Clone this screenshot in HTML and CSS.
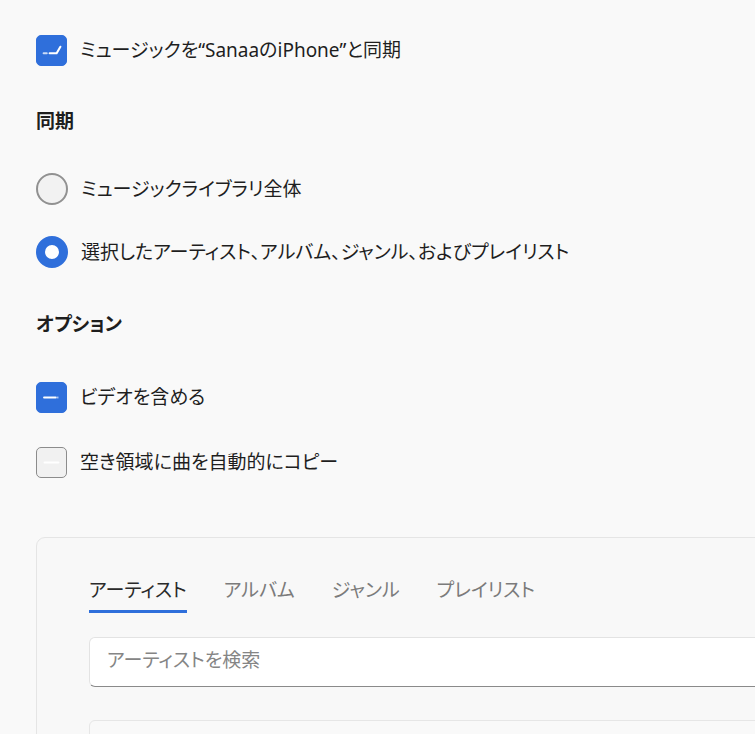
FILE: index.html
```html
<!DOCTYPE html>
<html lang="ja">
<head>
  <meta charset="UTF-8">
  <meta name="viewport" content="width=device-width, initial-scale=1.0">
  <title>ミュージックの同期</title>
  <link rel="stylesheet" href="styles.css">
</head>
<body>
  <div class="page">
    <div class="row row-first">
      <span class="box checked">
        <svg width="31" height="31" viewBox="0 0 31 31">
          <path d="M7 18.5h3.5" stroke="#fff" stroke-width="2" stroke-linecap="round" opacity="0.75"/>
          <path d="M13.5 18.5H21L25 11.5" stroke="#fff" stroke-width="2.2" fill="none" stroke-linecap="round" stroke-linejoin="round"/>
        </svg>
      </span>
      <span class="label">ミュージックを“SanaaのiPhone”と同期</span>
    </div>

    <div class="heading heading-sync">同期</div>

    <div class="row row-radio1">
      <span class="radio"></span>
      <span class="label">ミュージックライブラリ全体</span>
    </div>

    <div class="row row-radio2">
      <span class="radio selected"></span>
      <span class="label">選択したアーティスト、アルバム、ジャンル、およびプレイリスト</span>
    </div>

    <div class="heading heading-opt">オプション</div>

    <div class="row row-check1">
      <span class="box checked">
        <svg width="31" height="31" viewBox="0 0 31 31">
          <path d="M7.5 15.5H20" stroke="#fff" stroke-width="2" stroke-linecap="round"/>
          <path d="M21 15.5h2" stroke="#fff" stroke-width="2" opacity="0.6"/>
        </svg>
      </span>
      <span class="label">ビデオを含める</span>
    </div>

    <div class="row row-check2">
      <span class="box">
        <svg width="31" height="31" viewBox="0 0 31 31">
          <path d="M8 15.5H23" stroke="#fff" stroke-width="2" stroke-linecap="round"/>
        </svg>
      </span>
      <span class="label">空き領域に曲を自動的にコピー</span>
    </div>

    <div class="card">
      <div class="tabs">
        <span class="tab active">アーティスト</span>
        <span class="tab">アルバム</span>
        <span class="tab">ジャンル</span>
        <span class="tab">プレイリスト</span>
      </div>
      <div class="search">アーティストを検索</div>
      <div class="list"></div>
    </div>
  </div>
</body>
</html>
```

FILE: styles.css
```css
html, body {
  margin: 0;
  padding: 0;
  overflow: hidden;
}

body {
  background: #f9f9f9;
  color: #1e1e1e;
  font-family: "Noto Sans", "Noto Sans CJK JP", sans-serif;
  font-feature-settings: "palt";
  font-size: 19px;
}

/* the window clips the card on the right and bottom */
.page {
  width: 755px;
  height: 734px;
  box-sizing: border-box;
  overflow: hidden;
  padding: 34px 0 0 36px;
}

.row {
  display: flex;
  align-items: center;
  height: 32px;
}

.label {
  margin-left: 13px;
  line-height: 32px;
}

.heading {
  font-weight: 700;
  font-size: 19px;
  line-height: 28px;
  height: 28px;
}

.heading-sync { margin-top: 41px; }
.row-radio1 { margin-top: 38px; }
.row-radio2 { margin-top: 31px; }
.heading-opt { margin-top: 42px; }
.row-check1 { margin-top: 43px; }
.row-check2 { margin-top: 33px; }

.box {
  width: 31px;
  height: 31px;
  box-sizing: border-box;
  border-radius: 5px;
  border: 1.5px solid #8c8c8c;
  background: #f1f1f1;
  display: flex;
  align-items: center;
  justify-content: center;
  flex-shrink: 0;
}

.box svg {
  display: block;
}

.box.checked {
  background: #2f6fdb;
  border-color: #2f6fdb;
}

.radio {
  width: 32px;
  height: 32px;
  box-sizing: border-box;
  border-radius: 50%;
  border: 2px solid #919191;
  background: #f2f2f2;
  flex-shrink: 0;
}

.radio.selected {
  border: 9.5px solid #2f6fdb;
  background: #fff;
}

.card {
  margin-top: 59px;
  width: 800px;
  height: 260px;
  box-sizing: border-box;
  border: 1px solid #e5e5e5;
  border-radius: 9px;
  background: #f8f8f8;
  padding: 38px 0 0 52px;
}

.tabs {
  display: flex;
  gap: 37px;
}

.tab {
  font-size: 19px;
  line-height: 28px;
  color: #7b7b7b;
  padding-bottom: 6px;
  border-bottom: 3px solid transparent;
}

.tab.active {
  color: #2a2a2a;
  border-bottom-color: #2f6fdb;
}

.search {
  margin-top: 24px;
  height: 50px;
  box-sizing: border-box;
  background: #fff;
  border: 1px solid #e3e3e3;
  border-bottom: 1.5px solid #8a8a8a;
  border-radius: 6px;
  padding-left: 17px;
  line-height: 44px;
  color: #858585;
  font-size: 19px;
}

.list {
  margin-top: 33px;
  height: 80px;
  background: #f9f9f9;
  border: 1px solid #e6e6e6;
  border-radius: 6px;
}
```
